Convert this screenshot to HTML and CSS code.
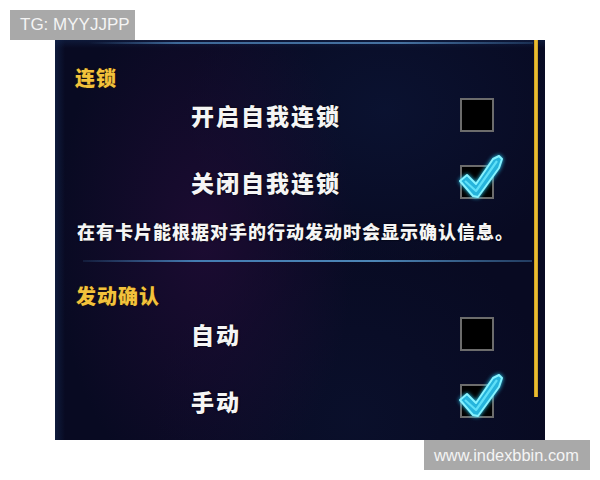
FILE: index.html
```html
<!DOCTYPE html>
<html lang="zh">
<head>
<meta charset="utf-8">
<title>连锁设置</title>
<link rel="stylesheet" href="styles.css">
</head>
<body>
<div class="tag tag-top">TG: MYYJJPP</div>
<div class="panel">
  <div class="scroll"></div>
  <div class="heading">连锁</div>
  <div class="row row-first">
    <span class="label">开启自我连锁</span>
    <span class="box"></span>
  </div>
  <div class="row row-next">
    <span class="label">关闭自我连锁</span>
    <span class="box">
      <svg class="check" width="52" height="52" viewBox="-2 -12 52 52">
        <polygon points="0,16 7,10 16,19 33,-6 39,-9 42,-6 39,3 18,32 13,31" fill="#26b4dc" stroke="#86f2ff" stroke-width="2" stroke-linejoin="round"/>
        <polyline points="5,16 16,26 37,-4" fill="none" stroke="#5ee0f8" stroke-width="2.2" stroke-linejoin="round"/>
      </svg>
    </span>
  </div>
  <div class="desc">在有卡片能根据对手的行动发动时会显示确认信息。</div>
  <div class="divider"></div>
  <div class="heading heading-second">发动确认</div>
  <div class="row row-short">
    <span class="label">自动</span>
    <span class="box"></span>
  </div>
  <div class="row row-next">
    <span class="label">手动</span>
    <span class="box">
      <svg class="check" width="52" height="52" viewBox="-2 -12 52 52">
        <polygon points="0,16 7,10 16,19 33,-6 39,-9 42,-6 39,3 18,32 13,31" fill="#26b4dc" stroke="#86f2ff" stroke-width="2" stroke-linejoin="round"/>
        <polyline points="5,16 16,26 37,-4" fill="none" stroke="#5ee0f8" stroke-width="2.2" stroke-linejoin="round"/>
      </svg>
    </span>
  </div>
</div>
<div class="tag tag-bottom">www.indexbbin.com</div>
</body>
</html>
```
FILE: styles.css
```css
html, body {
  margin: 0;
  padding: 0;
  background: #ffffff;
}
body {
  width: 600px;
  height: 480px;
  padding-top: 10px;
  box-sizing: border-box;
  font-family: "Noto Sans CJK SC", "Noto Sans", sans-serif;
}
.tag {
  background: #a9a9a9;
  color: #f4f4f4;
  font-family: "Liberation Sans", Arial, sans-serif;
  height: 30px;
  line-height: 30px;
  padding-left: 10px;
  box-sizing: border-box;
}
.tag-top {
  margin-left: 10px;
  width: 125px;
  font-size: 17px;
}
.tag-bottom {
  margin-left: 424px;
  width: 166px;
  font-size: 16.4px;
}
.panel {
  position: relative;
  margin-left: 55px;
  width: 490px;
  height: 400px;
  box-sizing: border-box;
  padding: 28px 0 0 20px;
  background-color: #080a22;
  background-image:
    linear-gradient(to right, rgba(60,110,160,0) 0%, rgba(70,120,170,0.85) 20%, rgba(80,130,180,0.85) 70%, rgba(60,110,160,0.3) 100%),
    linear-gradient(to bottom, rgba(20,40,80,0.5) 0, rgba(20,40,80,0) 8px),
    radial-gradient(ellipse 150px 260px at 150px 200px, rgba(36,12,56,0.7), rgba(36,12,56,0)),
    radial-gradient(ellipse 200px 160px at 330px 70px, rgba(14,30,70,0.4), rgba(14,30,70,0)),
    radial-gradient(ellipse 200px 200px at 300px 380px, rgba(12,22,54,0.45), rgba(12,22,54,0)),
    linear-gradient(to right, rgba(20,40,80,0.6) 0, rgba(20,40,80,0) 10px);
  background-size: 445px 2px, 100% 100%, 100% 100%, 100% 100%, 100% 100%, 100% 100%;
  background-position: 33px 2px, 0 0, 0 0, 0 0, 0 0, 0 0;
  background-repeat: no-repeat;
}
.scroll {
  position: absolute;
  left: 479px;
  top: 0;
  width: 4px;
  height: 357px;
  background: linear-gradient(to right, #c8981c, #f4c93a 50%, #c8981c);
}
.heading {
  color: #f2c23c;
  font-size: 20px;
  line-height: 20px;
  font-weight: 900;
  letter-spacing: 1px;
  text-shadow: 0 0 2px #2a1a00;
}
.heading-second {
  margin-top: 24px;
  margin-left: 1px;
}
.row {
  display: flex;
  align-items: center;
  justify-content: space-between;
  height: 34px;
  width: 303px;
  margin-left: 116px;
}
.row-first { margin-top: 10px; }
.row-next { margin-top: 33px; }
.row-short { margin-top: 11px; }
.label {
  color: #f5f5f5;
  font-size: 23px;
  line-height: 34px;
  font-weight: 900;
  letter-spacing: 2px;
  text-shadow: 0 0 2px #000;
}
.box {
  position: relative;
  width: 34px;
  height: 34px;
  box-sizing: border-box;
  border: 2px solid #6c6c6c;
  background: #000;
}
.check {
  position: absolute;
  left: -4px;
  top: -14px;
  overflow: visible;
  filter: drop-shadow(0 0 2px #29d4ff);
}
.desc {
  margin-top: 23px;
  margin-left: 2px;
  color: #f5f5f5;
  font-size: 18px;
  line-height: 18px;
  font-weight: 900;
  letter-spacing: 1px;
  text-shadow: 0 0 2px #000;
  white-space: nowrap;
}
.divider {
  margin-top: 20px;
  margin-left: 8px;
  width: 449px;
  height: 2px;
  background: linear-gradient(to right, rgba(50,100,150,0.2), rgba(70,130,185,0.95) 25%, rgba(80,140,190,0.95) 65%, rgba(60,110,160,0.5));
}
```
